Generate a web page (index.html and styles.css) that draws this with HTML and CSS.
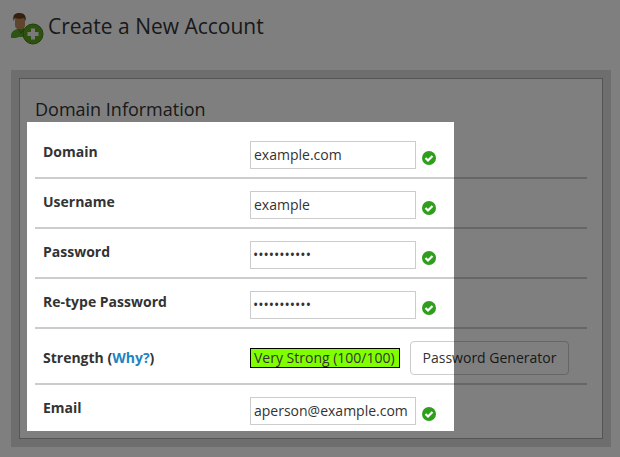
FILE: index.html
```html
<!DOCTYPE html>
<html lang="en">
<head>
    <meta charset="UTF-8">
    <title>Create a New Account</title>
    <link rel="stylesheet" href="styles.css">
</head>
<body>
    <header class="page-title">
        <svg class="title-icon" width="38" height="34" viewBox="0 0 38 34">
            <path d="M1 25c0-4 3-6 6-7l3-1 5 1 3 3-5 5-4 0-3 1-2 0-3 0z" fill="#5aa82c"/>
            <path d="M8 17l3 5 3-5" fill="none" stroke="#3c7d1a" stroke-width="1.200"/>
            <rect x="5" y="5" width="10" height="13" rx="4" fill="#c08a5c"/>
            <path d="M3.500 10c-1-6 1-8 6-8 5 0 7 3 6 8l-1.500-3c-3 1-6 1-9 0z" fill="#6b3f22"/>
            <circle cx="23" cy="23" r="10" fill="#5da31f" stroke="#3f7f12" stroke-width="1"/>
            <path d="M21 17.500h4v3.500h3.500v4h-3.500v3.500h-4v-3.500h-3.500v-4h3.500z" fill="#f2f2f2"/>
        </svg>
        <h1>Create a New Account</h1>
    </header>

    <div class="panel">
        <div class="panel-inner">
            <h2>Domain Information</h2>

            <div class="row">
                <label class="row-label">Domain</label>
                <input class="field" type="text" value="example.com">
                <svg class="check" width="14" height="14" viewBox="0 0 14 14"><circle cx="7" cy="7" r="7" fill="#2f9e1c"/><path d="M3.500 7l2.500 2.500 4.500-4.500" fill="none" stroke="#fff" stroke-width="2.200"/></svg>
            </div>
            <div class="row">
                <label class="row-label">Username</label>
                <input class="field" type="text" value="example">
                <svg class="check" width="14" height="14" viewBox="0 0 14 14"><circle cx="7" cy="7" r="7" fill="#2f9e1c"/><path d="M3.500 7l2.500 2.500 4.500-4.500" fill="none" stroke="#fff" stroke-width="2.200"/></svg>
            </div>
            <div class="row">
                <label class="row-label">Password</label>
                <input class="field field-secret" type="password" value="abcdefghijk">
                <svg class="check" width="14" height="14" viewBox="0 0 14 14"><circle cx="7" cy="7" r="7" fill="#2f9e1c"/><path d="M3.500 7l2.500 2.500 4.500-4.500" fill="none" stroke="#fff" stroke-width="2.200"/></svg>
            </div>
            <div class="row">
                <label class="row-label">Re-type Password</label>
                <input class="field field-secret" type="password" value="abcdefghijk">
                <svg class="check" width="14" height="14" viewBox="0 0 14 14"><circle cx="7" cy="7" r="7" fill="#2f9e1c"/><path d="M3.500 7l2.500 2.500 4.500-4.500" fill="none" stroke="#fff" stroke-width="2.200"/></svg>
            </div>
            <div class="row row-strength">
                <label class="row-label">Strength (<a href="#">Why?</a>)</label>
                <div class="strength-bar">Very Strong (100/100)</div>
                <button class="gen-btn" type="button">Password Generator</button>
            </div>
            <div class="row row-last">
                <label class="row-label">Email</label>
                <input class="field" type="text" value="aperson@example.com">
                <svg class="check" width="14" height="14" viewBox="0 0 14 14"><circle cx="7" cy="7" r="7" fill="#2f9e1c"/><path d="M3.500 7l2.500 2.500 4.500-4.500" fill="none" stroke="#fff" stroke-width="2.200"/></svg>
            </div>
        </div>
    </div>

    <div class="spotlight"></div>
</body>
</html>
```

FILE: styles.css
```css
* {
    margin: 0;
    padding: 0;
    box-sizing: border-box;
}

html, body {
    height: 457px;
    overflow: hidden;
}

body {
    position: relative;
    background: #fff;
    font-family: "Open Sans", sans-serif;
    font-size: 14px;
    color: #333;
}

.page-title {
    display: flex;
    align-items: flex-start;
    height: 70px;
    padding: 11px 0 0 10px;
}

.title-icon {
    flex: none;
}

.page-title h1 {
    font-size: 21px;
    font-weight: 400;
    line-height: 31px;
    color: #333;
}

.panel {
    width: 600px;
    height: 377px;
    margin-left: 11px;
    padding: 8px;
    background: #ddd;
}

.panel-inner {
    height: 100%;
    padding: 18px 15px 0;
    border: 1px solid #aaa;
    background: #fff;
}

.panel-inner h2 {
    font-size: 18px;
    font-weight: 400;
    line-height: 24px;
    margin-bottom: 8px;
}

.row {
    display: flex;
    align-items: flex-start;
    padding: 12px 0 8px 8px;
    border-bottom: 2px solid #ccc;
}

.row-last {
    border-bottom: 0;
}

.row-label {
    flex: none;
    width: 207px;
    font-weight: 700;
    line-height: 22px;
}

.row-label a {
    color: #1b85c4;
    text-decoration: none;
}

.row-strength {
    align-items: center;
}

.field {
    width: 166px;
    height: 28px;
    padding: 0 3px 2px;
    border: 1px solid #ccc;
    font-family: "Open Sans", sans-serif;
    font-size: 14px;
    color: #333;
    background: #fff;
    outline: none;
}

.field-secret {
    padding-left: 2px;
}

.check {
    flex: none;
    margin: 10px 0 0 6px;
}

.strength-bar {
    width: 150px;
    height: 20px;
    padding-left: 3px;
    border: 1px solid #000;
    background: #80ff00;
    line-height: 18px;
    white-space: nowrap;
}

.gen-btn {
    width: 159px;
    height: 34px;
    margin-left: 10px;
    padding-bottom: 1px;
    border: 1px solid #ccc;
    border-radius: 4px;
    background: #fff;
    font-family: "Open Sans", sans-serif;
    font-size: 14px;
    color: #333;
}

/* dims the whole page except the form area */
.spotlight {
    position: absolute;
    left: 27px;
    top: 122px;
    width: 427px;
    height: 309px;
    box-shadow: 0 0 0 700px rgba(0, 0, 0, 0.5);
}
```
